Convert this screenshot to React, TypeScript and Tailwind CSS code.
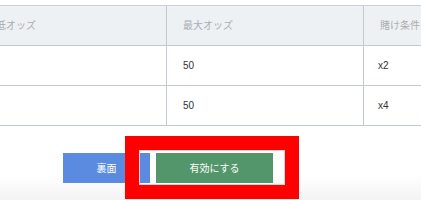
import React from 'react';

const rows = [
  { min: '1.5', max: '50', cond: 'x2' },
  { min: '1.5', max: '50', cond: 'x4' },
];

const App: React.FC = () => {
  return (
    <div
      className="relative w-[421px] h-[200px] overflow-hidden bg-[linear-gradient(to_bottom,#ffffff_88%,#f3f3f3)]"
      style={{ fontFamily: '"Liberation Sans", "Noto Sans CJK JP", sans-serif' }}
    >
      {/* Table */}
      <div className="mt-[5px] ml-[-30px] w-[600px] border-t border-[#c9d0d6] text-[10px]">
        <div className="flex h-[40px] bg-[#eef1f4] border-b border-[#c2cad1] text-[#a9adb2]">
          <div className="w-[197px] pl-[16px] flex items-center border-r border-[#c2cad1]">最低オッズ</div>
          <div className="w-[197px] pl-[16px] flex items-center border-r border-[#c2cad1]">最大オッズ</div>
          <div className="w-[197px] pl-[16px] flex items-center">賭け条件</div>
        </div>
        {rows.map((r, i) => (
          <div key={i} className="flex h-[40px] border-b border-[#c2cad1] text-[#333]">
            <div className="w-[197px] pl-[16px] flex items-center border-r border-[#c2cad1]">{r.min}</div>
            <div className="w-[197px] pl-[16px] flex items-center border-r border-[#c2cad1]">{r.max}</div>
            <div className="w-[197px] pl-[14px] flex items-center">{r.cond}</div>
          </div>
        ))}
      </div>

      {/* Buttons */}
      <div className="flex gap-[6px] pl-[63px] mt-[27px] text-[10px] text-white">
        <button className="w-[87px] h-[30px] bg-[#5b8be0] flex items-center justify-center">裏面</button>
        <button className="w-[117px] h-[30px] bg-[#53966b] flex items-center justify-center">有効にする</button>
      </div>

      {/* Highlight overlay */}
      <div className="absolute left-[125px] top-[136px] w-[174px] h-[63px] border-[14px] border-[#ff0000]">
        <div className="w-full h-full border border-[#ffd0d0]" />
      </div>
    </div>
  );
};

export default App;
